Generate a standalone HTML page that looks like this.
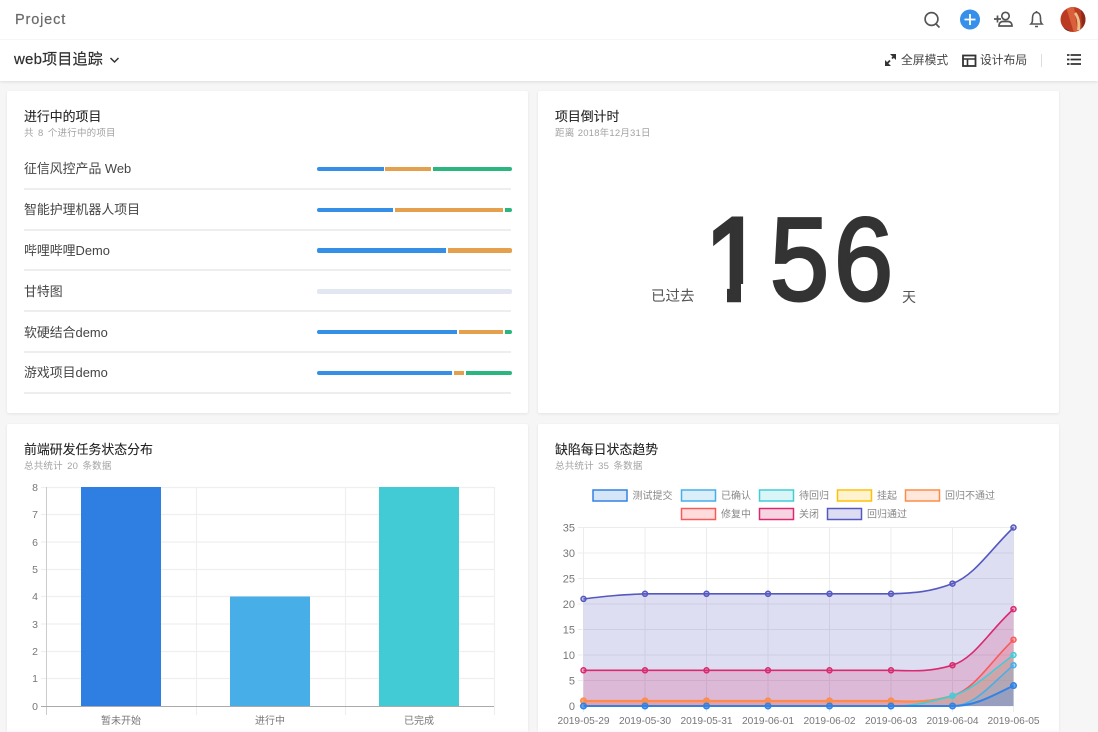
<!DOCTYPE html>
<html><head><meta charset="utf-8">
<style>
*{box-sizing:border-box}
html,body{margin:0;padding:0;width:1098px;height:732px;overflow:hidden;background:#f6f6f7}
body{font-family:"Liberation Sans","Noto Sans CJK SC",sans-serif;position:relative;color:#333}
.t{position:absolute;white-space:nowrap}
.card{position:absolute;background:#fff;border-radius:2px;box-shadow:0 1px 3px rgba(0,0,0,.08)}
.h{font-size:12.9px;line-height:18px;color:#222;-webkit-text-stroke:.1px #222}
.s{font-size:9.5px;line-height:14px;color:#a3a3a3;letter-spacing:.2px;word-spacing:1.5px}
.n{font-size:12.9px;line-height:18px;color:#444}
.sep{position:absolute;left:24px;width:487px;height:2px;background:#eee}
.b{position:absolute;height:4px}
.d{position:absolute;top:185px;font-size:118px;line-height:150px;color:#333;-webkit-text-stroke:3px #333;transform:scaleX(.9);transform-origin:0 0}
</style></head><body>
<div style="position:absolute;left:0;top:0;width:1098px;height:81px;background:#fff;box-shadow:0 1px 3px rgba(0,0,0,.1)"></div>
<div style="position:absolute;left:0;top:39px;width:1098px;height:1px;background:#f6f6f6"></div>
<div class="t" style="left:15px;top:11px;font-size:14.5px;line-height:18px;letter-spacing:.85px;color:#6a6a6a;-webkit-text-stroke:.2px #6a6a6a">Project</div>
<div class="t" style="left:14px;top:50px;font-size:15px;line-height:20px;letter-spacing:.2px;color:#2f2f2f;-webkit-text-stroke:.2px #2f2f2f">web项目追踪</div>
<svg style="position:absolute;left:0;top:0" width="1098" height="82" fill="none">
<path d="M110.500 58l4 4 4-4" stroke="#333" stroke-width="1.500"/>
<circle cx="931.500" cy="19" r="6.400" stroke="#555" stroke-width="1.700"/><path d="M936 24l3.500 3.500" stroke="#555" stroke-width="1.700"/>
<circle cx="970" cy="19.500" r="10" fill="#368fe9"/><path d="M970 14v11M964.500 19.500h11" stroke="#fff" stroke-width="1.800"/>
<circle cx="1005.500" cy="16" r="3.700" stroke="#555" stroke-width="1.700"/><path d="M999 26c0-2.800 1.500-4.500 4-4.500h5c2.500 0 4 1.700 4 4.500z" stroke="#555" stroke-width="1.700"/><path d="M994 19h7M997.500 15.500v7" stroke="#555" stroke-width="1.700"/>
<path d="M1031 24c1.500-1.500 1.500-3 1.500-6 0-3.500 1.500-5.500 4-5.500s4 2 4 5.500c0 3 0 4.500 1.500 6z" stroke="#555" stroke-width="1.600"/><path d="M1035 26.500h3M1036.500 11v1.500" stroke="#555" stroke-width="1.600"/>
<defs><clipPath id="av"><circle cx="1073" cy="19.500" r="12.500"/></clipPath></defs>
<g clip-path="url(#av)"><rect x="1060" y="7" width="26" height="26" fill="#bb3a22"/><path d="M1066 7l8 26h4l-4-26z" fill="#d9603a"/><path d="M1074 14c3 3 4 9 3 16h3c1-6 0-13-4-18z" fill="#e9c08a"/><path d="M1081 10l5 4v12l-4 4z" fill="#8e2a1a"/><path d="M1064 28l9 5h-9z" fill="#4a1a12"/></g>
<path d="M890 60.500l-4 4M895 55.500l-3 3" stroke="#333" stroke-width="1.800"/><path d="M885 60v6h6zM896 54h-6l6 6z" fill="#333"/>
<rect x="963" y="55.500" width="12.500" height="10.500" stroke="#333" stroke-width="1.800"/><path d="M963 59h12.500M967.500 59v7" stroke="#333" stroke-width="1.600"/>
<path d="M1041.500 54v13" stroke="#ddd"/>
<path d="M1070.500 55h10.500M1070.500 59.500h10.500M1070.500 64h10.500M1067 55h2.500M1067 59.500h2.500M1067 64h2.500" stroke="#333" stroke-width="1.700"/>
</svg>
<div class="t" style="left:901px;top:52px;font-size:11.800px;line-height:17px;color:#444">全屏模式</div>
<div class="t" style="left:980px;top:52px;font-size:11.800px;line-height:17px;color:#444">设计布局</div>

<div class="card" style="left:7px;top:91px;width:521px;height:322px"></div>
<div class="card" style="left:538px;top:91px;width:521px;height:322px"></div>
<div class="card" style="left:7px;top:424px;width:521px;height:320px"></div>
<div class="card" style="left:538px;top:424px;width:521px;height:320px"></div>

<div class="t h" style="left:24px;top:108px">进行中的项目</div>
<div class="t s" style="left:24px;top:127px">共 8 个进行中的项目</div>
<div class="t n" style="left:24px;top:160px">征信风控产品 Web</div>
<div class="t n" style="left:24px;top:201px">智能护理机器人项目</div>
<div class="t n" style="left:24px;top:242px">哔哩哔哩Demo</div>
<div class="t n" style="left:24px;top:283px">甘特图</div>
<div class="t n" style="left:24px;top:324px">软硬结合demo</div>
<div class="t n" style="left:24px;top:364px">游戏项目demo</div>
<div class="sep" style="top:188px"></div><div class="sep" style="top:229px"></div><div class="sep" style="top:269px"></div><div class="sep" style="top:310px"></div><div class="sep" style="top:351px"></div><div class="sep" style="top:392px"></div>

<div class="b" style="left:317px;top:167px;width:67px;background:#368fe6;border-radius:2px 0 0 2px"></div><div class="b" style="left:385px;top:167px;width:46px;background:#e4a04c"></div><div class="b" style="left:433px;top:167px;width:79px;background:#2bb57f;border-radius:0 2px 2px 0"></div>
<div class="b" style="left:317px;top:208px;width:76px;background:#368fe6;border-radius:2px 0 0 2px"></div><div class="b" style="left:395px;top:208px;width:108px;background:#e4a04c"></div><div class="b" style="left:505px;top:208px;width:7px;background:#2bb57f;border-radius:0 2px 2px 0"></div>
<div class="b" style="left:317px;top:248px;height:5px;width:129px;background:#368fe6;border-radius:2px 0 0 2px"></div><div class="b" style="left:448px;top:248px;height:5px;width:64px;background:#e4a04c;border-radius:0 2px 2px 0"></div>
<div class="b" style="left:317px;top:289px;height:5px;width:195px;background:#e1e6f1;border-radius:2px"></div>
<div class="b" style="left:317px;top:330px;width:140px;background:#368fe6;border-radius:2px 0 0 2px"></div><div class="b" style="left:459px;top:330px;width:44px;background:#e4a04c"></div><div class="b" style="left:505px;top:330px;width:7px;background:#2bb57f;border-radius:0 2px 2px 0"></div>
<div class="b" style="left:317px;top:371px;width:135px;background:#368fe6;border-radius:2px 0 0 2px"></div><div class="b" style="left:454px;top:371px;width:10px;background:#e4a04c"></div><div class="b" style="left:466px;top:371px;width:46px;background:#2bb57f;border-radius:0 2px 2px 0"></div>

<div class="t h" style="left:555px;top:108px">项目倒计时</div>
<div class="t s" style="left:555px;top:127px;word-spacing:.5px">距离 2018年12月31日</div>
<div class="t" style="left:651px;top:288px;font-size:14.500px;line-height:18px;color:#555">已过去</div>
<div class="t" style="left:902px;top:288px;font-size:14px;line-height:18px;color:#555">天</div>
<div class="d" style="left:705px;-webkit-text-stroke-width:4.500px">1</div>
<div class="d" style="left:769.500px">5</div>
<div class="d" style="left:834px">6</div>
<div style="position:absolute;left:698px;top:284px;width:29px;height:22px;background:#fff"></div>
<div style="position:absolute;left:741px;top:284px;width:24px;height:22px;background:#fff"></div>

<div class="t h" style="left:24px;top:441px">前端研发任务状态分布</div>
<div class="t s" style="left:24px;top:460px">总共统计 20 条数据</div>
<div class="t h" style="left:555px;top:441px">缺陷每日状态趋势</div>
<div class="t s" style="left:555px;top:460px">总共统计 35 条数据</div>

<svg style="position:absolute;left:0;top:480px" width="530" height="252" font-family="Liberation Sans,Noto Sans CJK SC,sans-serif" font-size="10.500" fill="#777">
<g stroke="#efefef" fill="none" stroke-width="1.200">
<path d="M41 7.500H494M41 34.500H494M41 62H494M41 89.500H494M41 116.500H494M41 144H494M41 171.500H494M41 198.500H494"/>
<path d="M196.500 7V235M345.500 7V235M494.500 7V235"/>
</g>
<path d="M46.500 7V235" stroke="#ccc"/><path d="M41 226.500H494" stroke="#aaa"/>
<rect x="81" y="7" width="80" height="219" fill="#2f7fe2"/>
<rect x="230" y="116.500" width="80" height="109.500" fill="#48aee8"/>
<rect x="379" y="7" width="80" height="219" fill="#42cad5"/>
<g text-anchor="end"><text x="38" y="11">8</text><text x="38" y="38">7</text><text x="38" y="66">6</text><text x="38" y="93">5</text><text x="38" y="120">4</text><text x="38" y="148">3</text><text x="38" y="175">2</text><text x="38" y="202">1</text><text x="38" y="230">0</text></g>
<g text-anchor="middle" font-size="10"><text x="121" y="244">暂未开始</text><text x="270" y="244">进行中</text><text x="419" y="244">已完成</text></g>
</svg>

<svg style="position:absolute;left:538px;top:480px" width="530" height="252" viewBox="538 480 530 252" font-family="Liberation Sans,Noto Sans CJK SC,sans-serif" font-size="10" fill="#888">
<g stroke-width="1.500">
<rect x="593" y="490" width="34" height="11" fill="#d6e6f9" stroke="#3182e4"/>
<rect x="681.500" y="490" width="34" height="11" fill="#daeffa" stroke="#48aee8"/>
<rect x="759.500" y="490" width="34" height="11" fill="#d9f5f7" stroke="#42cdd6"/>
<rect x="837.500" y="490" width="34" height="11" fill="#fff2cf" stroke="#ffc107"/>
<rect x="905.500" y="490" width="34" height="11" fill="#ffe8db" stroke="#fd8c4b"/>
<rect x="681.500" y="508.500" width="34" height="11" fill="#ffdcdc" stroke="#f85a5a"/>
<rect x="759.500" y="508.500" width="34" height="11" fill="#f7d4e2" stroke="#d92a6f"/>
<rect x="827.500" y="508.500" width="34" height="11" fill="#dcddf2" stroke="#5558bf"/>
</g>
<text x="632.500" y="499">测试提交</text><text x="721" y="499">已确认</text><text x="799" y="499">待回归</text><text x="877" y="499">挂起</text><text x="945" y="499">回归不通过</text>
<text x="721" y="517.500">修复中</text><text x="799" y="517.500">关闭</text><text x="867" y="517.500">回归通过</text>
<g stroke="#ececec" fill="none">
<path d="M578 527.500H1014M578 553H1014M578 578.500H1014M578 604H1014M578 629.500H1014M578 655H1014M578 680.500H1014M578 706H1014"/>
<path d="M583.500 527V712M645 527V712M706.500 527V712M768 527V712M829.500 527V712M891 527V712M952.500 527V712M1013.500 527V712"/>
</g>
<g font-size="11" text-anchor="end" fill="#777"><text x="575" y="531.500">35</text><text x="575" y="557">30</text><text x="575" y="582.500">25</text><text x="575" y="608">20</text><text x="575" y="633.500">15</text><text x="575" y="659">10</text><text x="575" y="684.500">5</text><text x="575" y="710">0</text></g>
<g font-size="10.200" text-anchor="middle" fill="#777"><text x="583.500" y="724">2019-05-29</text><text x="645" y="724">2019-05-30</text><text x="706.500" y="724">2019-05-31</text><text x="768" y="724">2019-06-01</text><text x="829.500" y="724">2019-06-02</text><text x="891" y="724">2019-06-03</text><text x="952.500" y="724">2019-06-04</text><text x="1013.500" y="724">2019-06-05</text></g>

<path d="M583.500 598.900C608 596 620 594.800 645 593.800H891C915 593 930 592 952.500 583.600C975 575 990 550 1013.500 527.500V706H583.500Z" fill="#5558bf" fill-opacity=".2"/>
<path d="M583.500 670.300H891C915 671 930 672 952.500 665.200C975 658 990 630 1013.500 609.100V706H583.500Z" fill="#d92a6f" fill-opacity=".2"/>
<path d="M583.500 700.900H891C915 702 930 702 952.500 695.800C975 689 990 662 1013.500 639.700V706H583.500Z" fill="#f85a5a" fill-opacity=".2"/>
<path d="M583.500 700.900H891C915 702 930 702 952.500 695.800C975 689 990 674 1013.500 655V706H583.500Z" fill="#fd8c4b" fill-opacity=".25"/>
<path d="M891 706C915 706 930 702 952.500 695.800C975 689 990 672 1013.500 655V706Z" fill="#42cdd6" fill-opacity=".15"/>
<path d="M952.500 706C975 706 990 685 1013.500 665.200V706Z" fill="#48aee8" fill-opacity=".2"/>
<path d="M952.500 706C975 706 990 697 1013.500 685.600V706Z" fill="#3182e4" fill-opacity=".2"/>

<g fill="none" stroke-width="1.600">
<path d="M583.500 598.900C608 596 620 594.800 645 593.800H891C915 593 930 592 952.500 583.600C975 575 990 550 1013.500 527.500" stroke="#5558bf"/>
<path d="M583.500 670.300H891C915 671 930 672 952.500 665.200C975 658 990 630 1013.500 609.100" stroke="#d92a6f"/>
<path d="M583.500 700.900H891C915 702 930 702 952.500 695.800C975 689 990 662 1013.500 639.700" stroke="#f85a5a"/>
<path d="M583.500 700.900H891C915 702 930 702 952.500 695.800" stroke="#fd8c4b" stroke-width="2"/>
<path d="M891 706C915 706 930 702 952.500 695.800C975 689 990 672 1013.500 655" stroke="#42cdd6"/>
<path d="M583.500 706H952.500C975 706 990 685 1013.500 665.200" stroke="#48aee8"/>
<path d="M583.500 706H952.500C975 706 990 697 1013.500 685.600" stroke="#3182e4" stroke-width="2"/>
</g>
<g fill="#5558bf" fill-opacity=".35" stroke="#5558bf" stroke-width="1.500"><circle cx="583.500" cy="598.900" r="2.500"/><circle cx="645" cy="593.800" r="2.500"/><circle cx="706.500" cy="593.800" r="2.500"/><circle cx="768" cy="593.800" r="2.500"/><circle cx="829.500" cy="593.800" r="2.500"/><circle cx="891" cy="593.800" r="2.500"/><circle cx="952.500" cy="583.600" r="2.500"/><circle cx="1013.500" cy="527.500" r="2.500"/></g>
<g fill="#d92a6f" fill-opacity=".35" stroke="#d92a6f" stroke-width="1.500"><circle cx="583.500" cy="670.300" r="2.500"/><circle cx="645" cy="670.300" r="2.500"/><circle cx="706.500" cy="670.300" r="2.500"/><circle cx="768" cy="670.300" r="2.500"/><circle cx="829.500" cy="670.300" r="2.500"/><circle cx="891" cy="670.300" r="2.500"/><circle cx="952.500" cy="665.200" r="2.500"/><circle cx="1013.500" cy="609.100" r="2.500"/></g>
<g fill="#fd8c4b" stroke="#fd8c4b" stroke-width="1.500" fill-opacity=".8"><circle cx="583.500" cy="700.900" r="2.800"/><circle cx="645" cy="700.900" r="2.800"/><circle cx="706.500" cy="700.900" r="2.800"/><circle cx="768" cy="700.900" r="2.800"/><circle cx="829.500" cy="700.900" r="2.800"/><circle cx="891" cy="700.900" r="2.800"/></g>
<circle cx="1013.500" cy="639.700" r="2.500" fill="#f85a5a" fill-opacity=".4" stroke="#f85a5a" stroke-width="1.500"/>
<circle cx="1013.500" cy="655" r="2.500" fill="#42cdd6" fill-opacity=".4" stroke="#42cdd6" stroke-width="1.500"/>
<circle cx="952.500" cy="695.800" r="2.500" fill="#42cdd6" fill-opacity=".6" stroke="#42cdd6" stroke-width="1.500"/>
<circle cx="1013.500" cy="665.200" r="2.500" fill="#48aee8" fill-opacity=".4" stroke="#48aee8" stroke-width="1.500"/>
<g fill="#3182e4" fill-opacity=".7" stroke="#3182e4" stroke-width="1.500"><circle cx="583.500" cy="706" r="2.800"/><circle cx="645" cy="706" r="2.800"/><circle cx="706.500" cy="706" r="2.800"/><circle cx="768" cy="706" r="2.800"/><circle cx="829.500" cy="706" r="2.800"/><circle cx="891" cy="706" r="2.800"/><circle cx="952.500" cy="706" r="2.800"/><circle cx="1013.500" cy="685.600" r="2.800"/></g>
</svg>
<div style="position:absolute;left:0;top:728px;width:1098px;height:4px;background:linear-gradient(rgba(246,246,247,0),rgba(246,246,247,.5))"></div>
</body></html>
